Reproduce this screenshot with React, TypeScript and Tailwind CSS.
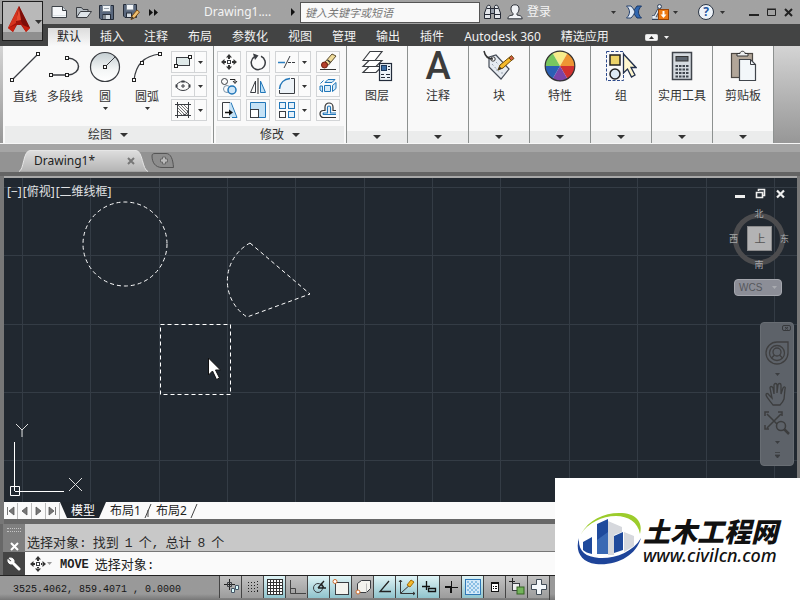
import type { ReactNode } from "react";

const ui = "font-['Noto_Sans','Noto_Sans_CJK_SC',sans-serif]";

function Caret({ className = "" }: { className?: string }) {
  return (
    <svg width="5" height="3" viewBox="0 0 5 3" className={className} aria-hidden="true">
      <path d="M0 0h5L2.5 3z" fill="currentColor" />
    </svg>
  );
}

function PanelCaret() {
  return (
    <svg width="8" height="4" viewBox="0 0 8 4" aria-hidden="true">
      <path d="M0 0h8L4 4z" fill="#333" />
    </svg>
  );
}

function Node({ x, y }: { x: number; y: number }) {
  return <rect x={x - 1.5} y={y - 1.5} width="3" height="3" fill="#fff" stroke="#222" />;
}

function Svg({ w, h, children }: { w: number; h: number; children: ReactNode }) {
  return (
    <svg width={w} height={h} viewBox={`0 0 ${w} ${h}`} fill="none" stroke="#3a3d42" className="block shrink-0" aria-hidden="true">
      {children}
    </svg>
  );
}

/* ---------- title bar ---------- */

function AppLogo() {
  return (
    <svg width="24" height="27" viewBox="0 0 24 27" aria-hidden="true">
      <path d="M12 0 1 22l5 4 4-7h4l5 7 4-4z" fill="#a3140c" />
      <path d="M12 0 1 22l8-5z" fill="#d5341f" />
      <path d="M12 0 9 17l3-6 4 8 7 3z" fill="#7d0e09" />
      <path d="M12 2l-3 13 5-1z" fill="#e64a30" />
      <path d="M1 22l5 4 3-7zM23 22l-4 4-4-7z" fill="#c8200f" />
    </svg>
  );
}

function IconNew() {
  return (
    <Svg w={17} h={14}>
      <path d="M1 1.5h10.5l4 4V12.5H1z" fill="#f6f8fa" stroke="#3b4046" />
      <path d="M11.5 1.5v4h4" fill="#cfd6dc" />
      <path d="M2 10.5h13" stroke="#dce2e6" />
    </Svg>
  );
}
function IconOpen() {
  return (
    <Svg w={17} h={14}>
      <path d="M1.5 12.5V2.5h5l1.5 2h5v3" fill="#b9c0c6" />
      <path d="M1.5 12.5l4-6h11l-4.5 6z" fill="#dfe5ea" />
    </Svg>
  );
}
function IconSave() {
  return (
    <Svg w={15} h={15}>
      <path d="M.5.5h14v14H2L.5 13z" fill="#59677d" stroke="#252c38" />
      <rect x="3.5" y=".5" width="8" height="6" fill="#f2f5f8" stroke="#77828f" />
      <path d="M5 3.5h5" stroke="#9aa5b0" />
      <rect x="4" y="9.5" width="7.5" height="5" fill="#d3dae1" stroke="#252c38" />
      <path d="M6 10v4" stroke="#252c38" />
    </Svg>
  );
}
function IconSaveAs() {
  return (
    <Svg w={17} h={16}>
      <path d="M.5.5h13v13H2L.5 12z" fill="#59677d" stroke="#252c38" />
      <rect x="3.5" y=".5" width="7" height="5.5" fill="#f2f5f8" stroke="#77828f" />
      <rect x="3.5" y="9" width="5" height="4.5" fill="#d3dae1" stroke="#252c38" />
      <path d="M8 15.5l1-3.5 5-6 2.500 2-5 6z" fill="#f0c070" stroke="#7a4b12" />
      <path d="M8 15.5l1-3 2 1.5z" fill="#333" stroke="none" />
    </Svg>
  );
}
function IconBinoculars() {
  return (
    <Svg w={17} h={16}>
      <path d="M3 2.5C3 .8 6.5.8 6.5 2.5V14.500h-6V9z" fill="#e4e7ec" stroke="#262b36" />
      <path d="M14 2.5C14 .8 10.5.8 10.5 2.5V14.500h6V9z" fill="#e4e7ec" stroke="#262b36" />
      <path d="M6.500 4.500h4v5h-4z" fill="#9ba2ad" stroke="#262b36" />
      <path d="M.5 10.500h6M10.500 10.500h6M3 4.500h3M11 4.500h3" stroke="#262b36" />
    </Svg>
  );
}
function IconUser() {
  return (
    <Svg w={16} h={16}>
      <path d="M.8 14.8c0-2.800 2.200-3.300 5.200-3.800V9.500C4.500 8 4 6.500 4 4.800 4 2 5.500.8 8 .8s4 1.200 4 4c0 1.700-.5 3.200-2 4.700V11c3 .5 5.200 1 5.200 3.800z" fill="#f1f3f6" stroke="#30343c" />
    </Svg>
  );
}
function IconExchange() {
  return (
    <Svg w={16} h={14}>
      <path d="M15.500 1h-4.500L8.500 4.500 7 7l1.500 2.500L11 13h4.500c-2-2-3-4-3-6s1-4 3-6z" fill="#2f66b0" stroke="#1d3a68" />
      <path d="M.5 1H5l2.500 3L9 7l-1.500 3L5 13H.5c2-2 3-4 3-6s-1-4-3-6z" fill="#dfe9f5" stroke="#26426f" />
    </Svg>
  );
}
function IconDownload() {
  return (
    <Svg w={17} h={16}>
      <path d="M7.5 1v3L3 12.5H1v2h6" stroke="#34445c" strokeWidth="3" />
      <path d="M7.5 1v3L3 12.5H1v1.500h6" stroke="#e8eef5" strokeWidth="1.5" />
      <circle cx="7.5" cy="2.5" r="2" fill="#dfe7f0" stroke="#34445c" />
      <rect x="6.5" y="5.5" width="10" height="10" fill="#ee7a12" stroke="#9c4404" />
      <path d="M11.5 7v4" stroke="#fff" strokeWidth="2" />
      <path d="M8.500 10.500h6l-3 3.500z" fill="#fff" stroke="none" />
    </Svg>
  );
}
function IconHelp() {
  return (
    <span className="flex size-4 items-center justify-center rounded-full border border-[#2b3544] bg-[#eef3f9] text-xs font-bold leading-none text-[#2557a0]">
      ?
    </span>
  );
}

/* ---------- ribbon icons ---------- */

function IconLine() {
  return (
    <Svg w={30} h={30}>
      <path d="M2 28 28 2" strokeWidth="1.2" />
      <Node x={2} y={28} />
      <Node x={28} y={2} />
    </Svg>
  );
}
function IconPolyline() {
  return (
    <Svg w={32} h={30}>
      <path d="M18 6h1c14 1 14 16 0 17H3" strokeWidth="1.5" />
      <Node x={18} y={6} />
      <Node x={18} y={23} />
      <Node x={2} y={23} />
    </Svg>
  );
}
function IconCircle() {
  return (
    <Svg w={32} h={32}>
      <defs>
        <linearGradient id="circleFill" x1="0" y1="0" x2="0" y2="1">
          <stop offset="0" stopColor="#c4ced2" />
          <stop offset=".6" stopColor="#f4f6f6" />
          <stop offset="1" stopColor="#fff" />
        </linearGradient>
      </defs>
      <circle cx="16" cy="16" r="14.5" fill="url(#circleFill)" strokeWidth="1.2" />
      <path d="M16 16 26 6" />
      <Node x={16} y={16} />
    </Svg>
  );
}
function IconArc() {
  return (
    <Svg w={30} h={30}>
      <path d="M2 28C4 12 12 4 28 2" strokeWidth="1.2" />
      <Node x={2} y={28} />
      <Node x={10} y={11} />
      <Node x={28} y={2} />
    </Svg>
  );
}
function IconRect() {
  return (
    <Svg w={18} h={14}>
      <rect x="2.5" y="2.5" width="13" height="8" fill="#dfe9e9" />
      <Node x={2} y={11} />
      <Node x={16} y={2} />
    </Svg>
  );
}
function IconEllipse() {
  return (
    <Svg w={18} h={14}>
      <ellipse cx="9" cy="7" rx="6.5" ry="4.5" />
      <path d="M9 5v4M7 7h4" />
      <path d="M2.5 5.5v3M15.5 5.5v3M7.500 2.500h3" strokeWidth="2" />
    </Svg>
  );
}
function IconHatch() {
  return (
    <Svg w={18} h={18}>
      <path d="M3.5 1v16M14.5 1v16M1 3.500h16M1 14.500h16" />
      <path d="M4 10l4 4M4 7l7 7M4 4l10 10M7 4l7 7M10 4l4 4" stroke="#777" />
      <path d="M9 14c3 0 5-2 5-5" />
    </Svg>
  );
}
function IconMove() {
  return (
    <Svg w={18} h={18}>
      <g fill="#333" stroke="none">
        <path d="M9 1l3 3.500H6zM9 17l3-3.500H6zM1 9l3.500-3v6zM17 9l-3.500-3v6z" />
        <path d="M8 4h2v2H8zM8 12h2v2H8zM4 8h2v2H4zM12 8h2v2h-2z" />
      </g>
      <rect x="7.5" y="7.5" width="3" height="3" fill="#fff" />
    </Svg>
  );
}
function IconRotate() {
  return (
    <Svg w={18} h={18}>
      <path d="M5.500 3.700A7 7 0 1 0 12 3.200" strokeWidth="1.500" />
      <path d="M4 .5l5.500 2L6 7z" fill="#3a3d42" stroke="none" />
    </Svg>
  );
}
function IconTrim() {
  return (
    <Svg w={18} h={18}>
      <path d="M0 9.500h7" stroke="#2a7fc1" strokeWidth="1.5" />
      <path d="M10 9.500h8" strokeDasharray="3 1" />
      <path d="M6 15l6-12" />
    </Svg>
  );
}
function IconErase() {
  return (
    <Svg w={18} h={18}>
      <path d="M1 16.500h16" stroke="#333" />
      <path d="M6 9l7-8 4 2-7.500 9z" fill="#f0dc9b" stroke="#5a4b2d" />
      <path d="M8.500 7l3 2.500" stroke="#333" strokeWidth="1.5" />
      <circle cx="5.5" cy="12" r="3" fill="#b5402c" stroke="#6e2013" />
    </Svg>
  );
}
function IconCopy() {
  return (
    <Svg w={18} h={18}>
      <circle cx="4.5" cy="4.5" r="3" />
      <path d="M10 2.500h5v3M13 4l2 2.500L17 4" stroke="#222" />
      <circle cx="7" cy="12" r="3.5" stroke="#7c93a8" />
      <circle cx="12" cy="13" r="4" fill="#cfe6f7" stroke="#2176b8" strokeWidth="1.5" />
    </Svg>
  );
}
function IconMirror() {
  return (
    <Svg w={18} h={18}>
      <path d="M6.5 4v11.500H1.500z" />
      <path d="M9 1v16" stroke="#222" />
      <path d="M11.5 4v11.500h5z" fill="#bfe0f5" stroke="#2176b8" />
    </Svg>
  );
}
function IconFillet() {
  return (
    <Svg w={18} h={18}>
      <path d="M1.5 17V13C2 6 6 2 13 1.500h4V16.500H1.500z" fill="#edf3f8" stroke="none" />
      <path d="M1.5 12C2 6 6 2 12 1.500" stroke="#2176b8" strokeWidth="1.5" />
      <path d="M13 1.500h3.500V16.500H1.500V13" />
    </Svg>
  );
}
function IconExplode() {
  return (
    <Svg w={18} h={18}>
      <g fill="#d8ecf9" stroke="#2176b8">
        <path d="M5.500 8.500h6v6h-6z" />
        <path d="M6 5.500l3-3h7l-3 3z" />
        <path d="M13.500 8.500l3.500-3v6l-3.500 3z" />
        <path d="M3.500 9v6L1 13V9zM1.500 6.500l3-3" />
      </g>
    </Svg>
  );
}
function IconStretch() {
  return (
    <Svg w={18} h={18}>
      <path d="M10.5 1.500 16.500 16.500H9V1.500z" fill="#c5e2f6" stroke="none" />
      <path d="M11 1.500l6 15h-5" stroke="#2176b8" />
      <path d="M10 1.500H2.500v15H10" />
      <path d="M5 11.500h5" stroke="#111" strokeWidth="1.5" />
      <path d="M9 8.500l4 3-4 3z" fill="#111" stroke="none" />
    </Svg>
  );
}
function IconScale() {
  return (
    <Svg w={18} h={18}>
      <path d="M1.500 1.500h15v15h-15z" fill="#c5e2f6" stroke="#2176b8" />
      <rect x="1.5" y="8.5" width="8" height="8" fill="#fff" />
    </Svg>
  );
}
function IconArray() {
  return (
    <Svg w={18} h={18}>
      <rect x="1.5" y="10.5" width="6" height="6" />
      <g fill="#e6f2fb" stroke="#2176b8">
        <rect x="1.5" y="1.5" width="6" height="6" />
        <rect x="10.5" y="1.5" width="6" height="6" />
        <rect x="10.5" y="10.5" width="6" height="6" />
      </g>
    </Svg>
  );
}
function IconOffset() {
  return (
    <Svg w={18} h={18}>
      <path d="M17 16.500H4.500a3.500 3.500 0 0 1 0-7H6V6a4 4 0 0 1 8 0v3.500h3" stroke="#333" strokeWidth="1.2" />
      <path d="M17 13.500H4.500a1 1 0 0 1 0-1.500H8.500V6.500a1.500 1.500 0 0 1 3 0V12H17" stroke="#2176b8" strokeWidth="1.2" />
    </Svg>
  );
}
function IconLayers() {
  return (
    <Svg w={32} h={32}>
      <g fill="#fff" strokeWidth="1.2">
        <path d="M2 22.500l6-6h13l-6 6z" />
        <path d="M2 16.500l6-6h13l-6 6z" />
        <path d="M2 10.500l7-9h12l-7 9z" />
      </g>
      <rect x="18.5" y="13.5" width="12" height="17" fill="#edf3f9" stroke="#222b3a" strokeWidth="1.2" />
      <rect x="20.5" y="15.5" width="5" height="5" fill="#3c6ea4" stroke="#1c3658" />
      <path d="M27 16.500h2M27 19.500h2M20 24.500h3M25 24.500h4M20 27.500h4M26 27.500h3" stroke="#222b3a" />
    </Svg>
  );
}
function IconTag() {
  return (
    <Svg w={32} h={32}>
      <path d="M6 7l7-2 13 14-8 10L6 17z" fill="#e6ebf1" stroke="#454c57" strokeWidth="1.2" />
      <path d="M9 14l8 9M13 12l7 7M13 20h3M18 23h2" stroke="#9aa3ae" strokeDasharray="2 2" />
      <circle cx="10" cy="9" r="2.2" fill="#fff" stroke="#333" />
      <path d="M10 9C4 9 2 6 1 1" stroke="#333" strokeWidth="1.5" />
      <path d="M15 20l2-5L28 6l2 3-10 9z" fill="#f4b92b" stroke="#704b08" />
      <path d="M26 8l2.500-2.500 2.500 3-2.500 2z" fill="#cf5b45" stroke="#704b08" />
      <path d="M15 20l1.500-3.500 2.500 2z" fill="#333" stroke="none" />
    </Svg>
  );
}
function IconWheel() {
  return (
    <Svg w={32} h={32}>
      <g stroke="none">
        <path d="M16 16 8.500 3a15 15 0 0 1 15 0z" fill="#f7ec8b" />
        <path d="M16 16 23.500 3A15 15 0 0 1 31 16z" fill="#ee9433" />
        <path d="M16 16H31a15 15 0 0 1-7.500 13z" fill="#d13130" />
        <path d="M16 16l7.500 13a15 15 0 0 1-15 0z" fill="#7b44a8" />
        <path d="M16 16 8.500 29A15 15 0 0 1 1 16z" fill="#2b5fb4" />
        <path d="M16 16H1A15 15 0 0 1 8.500 3z" fill="#78c65f" />
      </g>
      <circle cx="16" cy="16" r="14.8" stroke="#333" strokeWidth="1.2" />
    </Svg>
  );
}
function IconGroup() {
  return (
    <Svg w={32} h={32}>
      <rect x="1.5" y="1.5" width="17" height="29" stroke="#2e4b8c" strokeDasharray="3 1.5" />
      <rect x="5" y="5" width="10" height="10" fill="#ecd268" stroke="#222" strokeWidth="1.5" />
      <circle cx="10" cy="24" r="5" fill="#dde9f2" stroke="#222" strokeWidth="1.5" />
      <path d="M18.500 4v19l4-4 4 8 3.500-2-4-7.500h5z" fill="#fff7cf" stroke="#22304c" strokeWidth="1.3" />
    </Svg>
  );
}
function IconCalc() {
  return (
    <Svg w={32} h={32}>
      <rect x="6.5" y="2.5" width="19" height="27" fill="#d5dadf" stroke="#40454c" strokeWidth="1.5" />
      <rect x="10" y="6.5" width="12" height="4.5" fill="#5d656f" stroke="#333" />
      <g stroke="#3f454d" strokeWidth="2.2" strokeDasharray="2.5 1">
        <path d="M9.500 16h13.500M9.500 19.500h13.500M9.500 23h13.500M9.500 26.500h13.500" />
      </g>
    </Svg>
  );
}
function IconClipboard() {
  return (
    <Svg w={32} h={32}>
      <rect x="4.5" y="3.5" width="21" height="24" fill="#b2a699" stroke="#4d4843" strokeWidth="1.2" />
      <path d="M10 6V3.500h3c0-3 5-3 5 0h3V6z" fill="#eceef0" stroke="#333" />
      <path d="M12.500 9.500h11l5 5v16h-16z" fill="#f3f7fa" stroke="#40454c" strokeWidth="1.2" />
      <path d="M23.500 9.500v5h5" />
    </Svg>
  );
}

/* ---------- ribbon parts ---------- */

function BigTool({ label, icon, caret, className }: { label: string; icon: ReactNode; caret?: boolean; className: string }) {
  return (
    <button className={`flex flex-col items-center ${className}`}>
      <span className="flex h-8 items-center">{icon}</span>
      <span className="mt-1 leading-5">{label}</span>
      {caret && <Caret />}
    </button>
  );
}

function ToolButton({ label, icon }: { label: string; icon: ReactNode }) {
  return (
    <button aria-label={label} className="flex h-[22px] w-6 items-center justify-center border border-[#d2d4d6] bg-[#fbfbfb]">
      {icon}
    </button>
  );
}

function SplitButton({ label, icon }: { label: string; icon: ReactNode }) {
  return (
    <div className="flex h-[22px] w-9 border border-[#d2d4d6] bg-[#fbfbfb]">
      <button aria-label={label} className="flex w-[22px] items-center justify-center">
        {icon}
      </button>
      <button aria-label={`${label} ▾`} className="flex flex-1 items-center justify-center border-l border-[#d2d4d6]">
        <Caret />
      </button>
    </div>
  );
}

function PanelTitle({ children }: { children: ReactNode }) {
  return (
    <button className="mx-0.5 flex h-[17px] items-center justify-center gap-2 bg-[#ebecec] leading-none">{children}</button>
  );
}

const smallPanels: { label: string; icon: ReactNode }[] = [
  { label: "图层", icon: <IconLayers /> },
  { label: "注释", icon: <span className="text-[38px] font-medium leading-8 text-[#3c3c3c] font-['Roboto',sans-serif]">A</span> },
  { label: "块", icon: <IconTag /> },
  { label: "特性", icon: <IconWheel /> },
  { label: "组", icon: <IconGroup /> },
  { label: "实用工具", icon: <IconCalc /> },
  { label: "剪贴板", icon: <IconClipboard /> },
];

const ribbonTabs = ["插入", "注释", "布局", "参数化", "视图", "管理", "输出", "插件", "Autodesk 360", "精选应用"];

function Header() {
  return (
    <header className="flex bg-linear-to-b from-[#a2a2a2] from-[24px] to-[#434444] to-[24px] pl-0.5">
      <button aria-label="应用程序菜单" className="mt-px flex h-10 w-[41px] shrink-0 items-start gap-1 border border-[#1e1e1e] bg-linear-to-b from-[#b9b9b9] from-80% to-[#8f8f8f] to-80% pl-1 pt-1 text-[#333]">
        <AppLogo />
        <svg width="7" height="4" viewBox="0 0 7 4" className="mt-3.5 shrink-0" aria-hidden="true"><path d="M0 0h7L3.500 4z" fill="#333" /></svg>
      </button>
      <div className="min-w-0 flex-1">
        <div className="flex h-6 items-center pl-2 pr-[7px] text-[#333]">
          <div className="flex items-center gap-[7px]">
            <button aria-label="新建"><IconNew /></button>
            <button aria-label="打开"><IconOpen /></button>
            <button aria-label="保存"><IconSave /></button>
            <button aria-label="另存为" className="ml-0.5"><IconSaveAs /></button>
            <button aria-label="更多" className="ml-0.5">
              <Svg w={9} h={7}><path d="M0 0l4 3.500L0 7zM5 0l4 3.500L5 7z" fill="#111" stroke="none" /></Svg>
            </button>
          </div>
          <h1 className="ml-[46px] w-[87px] whitespace-nowrap text-xs text-[#f4f4f4]">Drawing1....</h1>
          <Svg w={4} h={8}><path d="M0 0l4 4-4 4z" fill="#111" stroke="none" /></Svg>
          <input
            aria-label="键入关键字或短语"
            placeholder="键入关键字或短语"
            className="ml-[5px] mr-1 h-[21px] w-[180px] border border-[#555] bg-[#f9f9f9] px-1 text-[11px] italic placeholder:text-[#777]"
          />
          <button aria-label="搜索"><IconBinoculars /></button>
          <button className="ml-1.5 flex items-center gap-1 whitespace-nowrap text-xs text-[#f4f4f4]"><IconUser />登录</button>
          <div className="ml-auto flex items-center gap-1.5">
            <button aria-label="登录选项" className="pr-1"><Caret /></button>
            <button aria-label="Exchange"><IconExchange /></button>
            <button aria-label="更新" className="ml-1 flex items-center gap-1"><IconDownload /><Caret /></button>
            <button aria-label="帮助" className="ml-3.5 flex items-center gap-1.5"><IconHelp /><Caret /></button>
          </div>
          <div className="ml-6 flex items-center gap-2">
            <button aria-label="最小化"><Svg w={10} h={10}><path d="M0 8h10" stroke="#222" strokeWidth="2" /></Svg></button>
            <button aria-label="最大化"><Svg w={9} h={9}><path d="M.5 1.500h8v6h-8zM0 1h9" stroke="#222" /></Svg></button>
            <button aria-label="关闭"><Svg w={9} h={9}><path d="M1 1l7 7M8 1 1 8" stroke="#222" strokeWidth="2" /></Svg></button>
          </div>
        </div>
        <nav className="flex h-[22px] items-center gap-5 pl-[5px] pt-1 text-xs leading-4 text-[#f2f2f2]">
          <button className="-mr-2.5 h-[18px] w-[42px] bg-linear-to-b from-[#dcdcdc] to-[#f9f9f9] text-[#222]">默认</button>
          {ribbonTabs.map((t) => (
            <button key={t} className="whitespace-nowrap">{t}</button>
          ))}
          <button aria-label="最小化功能区" className="ml-4 flex items-center gap-1.5">
            <Svg w={13} h={7}><rect x=".5" y=".5" width="12" height="6" rx="1" fill="#f5f5f5" stroke="#ddd" /><path d="M4 5l2.500-3L9 5z" fill="#333" stroke="none" /></Svg>
            <Caret />
          </button>
        </nav>
      </div>
    </header>
  );
}

function Ribbon() {
  return (
    <div className="flex h-[98px] border-b border-[#f6f6f6] bg-linear-to-b from-[#d4d4d4] to-[#979797] pl-[3px] text-xs text-[#333]">
      <section className="flex w-[211px] shrink-0 flex-col border-r border-[#8d9190] bg-[#f9f9f9]">
        <div className="flex flex-1 pl-0.5 pt-[5px]">
          <BigTool className="w-10" label="直线" icon={<IconLine />} />
          <BigTool className="w-10" label="多段线" icon={<IconPolyline />} />
          <BigTool className="w-10" label="圆" icon={<IconCircle />} caret />
          <BigTool className="w-11" label="圆弧" icon={<IconArc />} caret />
          <div className="ml-0.5 flex flex-col gap-0.5">
            <SplitButton label="矩形" icon={<IconRect />} />
            <SplitButton label="椭圆" icon={<IconEllipse />} />
            <SplitButton label="图案填充" icon={<IconHatch />} />
          </div>
        </div>
        <PanelTitle>绘图<PanelCaret /></PanelTitle>
      </section>
      <section className="flex w-[133px] shrink-0 flex-col border-r border-[#8d9190] bg-[#f9f9f9]">
        <div className="flex flex-1 gap-[5px] pl-[3px] pt-[5px]">
          <div className="flex flex-col gap-0.5">
            <ToolButton label="移动" icon={<IconMove />} />
            <ToolButton label="复制" icon={<IconCopy />} />
            <ToolButton label="拉伸" icon={<IconStretch />} />
          </div>
          <div className="flex flex-col gap-0.5">
            <ToolButton label="旋转" icon={<IconRotate />} />
            <ToolButton label="镜像" icon={<IconMirror />} />
            <ToolButton label="缩放" icon={<IconScale />} />
          </div>
          <div className="flex flex-col gap-0.5">
            <SplitButton label="修剪" icon={<IconTrim />} />
            <SplitButton label="圆角" icon={<IconFillet />} />
            <SplitButton label="阵列" icon={<IconArray />} />
          </div>
          <div className="flex flex-col gap-0.5">
            <ToolButton label="删除" icon={<IconErase />} />
            <ToolButton label="分解" icon={<IconExplode />} />
            <ToolButton label="偏移" icon={<IconOffset />} />
          </div>
        </div>
        <PanelTitle>修改<PanelCaret /></PanelTitle>
      </section>
      {smallPanels.map((p) => (
        <section key={p.label} className="flex w-[61px] shrink-0 flex-col border-r border-[#8d9190] bg-[#f9f9f9]">
          <button className="flex flex-1 flex-col items-center whitespace-nowrap pt-1">
            <span className="flex h-8 items-center">{p.icon}</span>
            <span className="mt-1 leading-5">{p.label}</span>
          </button>
          <button aria-label={`${p.label} ▾`} className="flex h-3 items-center justify-center bg-[#ebecec]"><PanelCaret /></button>
        </section>
      ))}
    </div>
  );
}

function DocTabs() {
  return (
    <div className="flex h-8 shrink-0 items-end border-b-4 border-[#646464] bg-linear-to-b from-[#a5a5a5] from-30% to-[#939393] to-30% pl-[19px]">
      <div className="relative flex h-[22px] w-[132px] items-center pl-[15px] text-xs text-[#222]">
        <svg className="absolute inset-0" width="132" height="22" viewBox="0 0 132 22" aria-hidden="true">
          <defs>
            <linearGradient id="docTab" x1="0" y1="0" x2="0" y2="1">
              <stop offset="0" stopColor="#dedede" />
              <stop offset="1" stopColor="#b4b4b4" />
            </linearGradient>
          </defs>
          <path d="M0 21.500C5 20 4 1 11 .5h106c7 .5 6 19 12 21" fill="url(#docTab)" stroke="#e6e6e6" />
        </svg>
        <button className="relative">Drawing1*</button>
        <button aria-label="关闭图形" className="relative ml-auto mr-4">
          <Svg w={8} h={8}><path d="M1 1l6 6M7 1 1 7" stroke="#777" strokeWidth="2" /></Svg>
        </button>
      </div>
      <button aria-label="新图形" className="mb-1">
        <Svg w={23} h={15}>
          <path d="M4 .5h11c5 0 7 6 7.500 14H11C4 14.500 1 9 1 3 1 1 2 .5 4 .5z" fill="#8d8d8d" stroke="#555" />
          <path d="M9.500 6h2V4h3v2h2v3h-2v2h-3V9h-2z" fill="#bbb" stroke="#6a6a6a" />
        </Svg>
      </button>
    </div>
  );
}

/* ---------- drawing area ---------- */

const gridX = Array.from({ length: 40 }, (_, i) => Math.round(18 + i * 68.35) + 0.5);
const gridY = Array.from({ length: 24 }, (_, i) => Math.round(9 + i * 68.35) + 0.5);

function ViewCube() {
  return (
    <svg width="60" height="66" viewBox="0 0 60 66" className="font-['Noto_Sans_CJK_SC',sans-serif]" aria-label="ViewCube">
      <circle cx="30" cy="33" r="23.5" fill="none" stroke="#4c4c4e" strokeWidth="5" />
      <rect x="18.5" y="20.5" width="24" height="24" fill="#b3b3b4" stroke="#8b8b8c" />
      <g fontSize="9" textAnchor="middle" fill="#a6a8aa">
        <text x="30" y="11">北</text>
        <text x="30" y="62">南</text>
        <text x="4.5" y="36">西</text>
        <text x="55.5" y="36">东</text>
        <text x="31" y="37" fontSize="11" fill="#555">上</text>
      </g>
    </svg>
  );
}

function NavBar() {
  return (
    <div className="flex h-36 w-[34px] flex-col items-center rounded border border-[#686d73] bg-[#5d6269] text-[#3b3d40]">
      <button aria-label="关闭导航栏" className="mr-0.5 mt-0.5 self-end">
        <Svg w={9} h={6}><rect x=".5" y=".5" width="8" height="5" rx="1.5" stroke="#37393c" /><path d="M3 2l3 2.500M6 2 3 4.500" stroke="#37393c" /></Svg>
      </button>
      <button aria-label="导航控制盘" className="mt-2.5 flex flex-col items-center gap-2">
        <Svg w={24} h={24}>
          <g stroke="#3f3f40" strokeWidth="1.3">
            <path d="M12 1h11v11A11 11 0 1 1 12 1z" />
            <circle cx="12" cy="12" r="7.5" />
            <circle cx="12" cy="11" r="4" />
            <path d="M6.500 17l3-3M17.500 17l-3-3" />
          </g>
        </Svg>
        <Caret />
      </button>
      <button aria-label="平移" className="mt-1.5">
        <Svg w={24} h={25}>
          <path d="M8 23C6 20 2 16 1 13c0-2 2-2 3 0l3 3-2-10c0-2 2-2 3 0l1 6V3c0-2 3-2 3 0v8l1-8c0-2 3-2 3 0v9l2-6c1-2 3-1 2 1l-1 10c-1 3-3 5-4 6z" stroke="#3c3d3e" strokeWidth="1.3" />
        </Svg>
      </button>
      <button aria-label="范围缩放" className="mt-1 flex flex-col items-center gap-1.5">
        <Svg w={26} h={24}>
          <g stroke="#3c3d3e" strokeWidth="1.5">
            <path d="M3 3l12 12M17 3 3 17M1 5V1h4M14 1h4v4M1 14v4h4" />
            <circle cx="17" cy="15" r="4.5" fill="#5d6269" />
            <path d="M20 18l5 5" strokeWidth="2.5" />
          </g>
        </Svg>
        <Caret />
      </button>
      <button aria-label="自定义" className="mt-2">
        <Svg w={5} h={6}><path d="M0 .5h5M0 3h5L2.500 6z" fill="#3b3d40" stroke="#3b3d40" strokeWidth=".8" /></Svg>
      </button>
    </div>
  );
}

function Canvas() {
  return (
    <main className="relative min-h-80 flex-1 overflow-hidden border-t-2 border-[#a8a8a8] bg-[#212830]">
      <svg className="absolute inset-0 size-full" fill="none" aria-label="图形">
        <g stroke="#343c45">
          {gridX.map((x) => <line key={x} x1={x} x2={x} y1="0" y2="100%" />)}
          {gridY.map((y) => <line key={y} x1="0" x2="100%" y1={y} y2={y} />)}
        </g>
        <g stroke="#fff" strokeDasharray="4 3">
          <circle cx="121" cy="66" r="42" />
          <path d="M246 65 306 116 243 139A43 43 0 0 1 246 65z" />
          <path d="M156.500 146.500h70v70h-70z" />
        </g>
        <path d="M204.500 180v17l4-4 4 8.500 3-1.500-4-8h5z" fill="#fff" stroke="#111" />
      </svg>
      <svg className="absolute bottom-1 left-1 overflow-visible" width="80" height="80" viewBox="0 0 80 80" fill="none" stroke="#fff" aria-label="UCS">
        <path d="M2.500 68.500h9v9h-9zM7 73.500h49M6.500 73V24" />
        <path d="M8 6l6 6 6-6M14 12v7M61 60l13 13M74 60 61 73" stroke="#ddd" />
      </svg>
      <p className="absolute left-[3px] top-1.5 flex gap-px text-xs text-[#e0e2e4]">
        <span>[−]</span><span>[俯视]</span><span>[二维线框]</span>
      </p>
      <div className="absolute right-3 top-2.5 flex items-center gap-2.5">
        <button aria-label="最小化视口"><Svg w={10} h={10}><path d="M0 7.500h10" stroke="#eee" strokeWidth="3" /></Svg></button>
        <button aria-label="还原视口"><Svg w={11} h={11}><path d="M3.500 3V1.500h6v6H8M1.500 4.500h6v5h-6z" stroke="#eee" strokeWidth="1.6" /></Svg></button>
        <button aria-label="关闭视口"><Svg w={9} h={10}><path d="M1 1.500l7 7M8 1.500l-7 7" stroke="#eee" strokeWidth="2.2" /></Svg></button>
      </div>
      <div className="absolute right-2 top-7"><ViewCube /></div>
      <button className="absolute right-[15px] top-[101px] flex h-[17px] w-12 items-center justify-between rounded border border-[#a5a7ae] bg-[#8c8e97] px-1 text-[10px] text-[#55575c] font-['Liberation_Sans',sans-serif]">
        WCS<Caret className="text-[#a9abb0]" />
      </button>
      <div className="absolute right-[3px] top-36"><NavBar /></div>
    </main>
  );
}

function LayoutTabs() {
  const nav = [
    { label: "首个", d: "M2.5 1v8M9 1v8L4 5z" },
    { label: "上一个", d: "M8 1v8L3 5z" },
    { label: "下一个", d: "M3 1v8l5-4z" },
    { label: "末个", d: "M2 1v8l5-4zM8.5 1v8" },
  ];
  return (
    <div className="flex h-[17px] shrink-0 items-center bg-[#fafafa] text-xs leading-none text-[#222]">
      {nav.map((n) => (
        <button key={n.label} aria-label={n.label} className="flex h-4 w-3.5 items-center justify-center border-r border-[#bbb]">
          <Svg w={11} h={10}><path d={n.d} fill="#777" stroke="#555" strokeWidth=".8" /></Svg>
        </button>
      ))}
      <button className="relative h-[17px] w-[46px] text-white">
        <svg className="absolute inset-0" width="46" height="17" viewBox="0 0 46 17" aria-hidden="true"><path d="M0 0h46l-7 16H7z" fill="#20262d" /></svg>
        <span className="relative">模型</span>
      </button>
      <button className="flex h-[17px] w-[46px] items-center justify-between pl-1">布局1<Svg w={8} h={14}><path d="M7 0 1 14M4 6v7" stroke="#444" /></Svg></button>
      <button className="flex h-[17px] w-[46px] items-center justify-between pl-1">布局2<Svg w={8} h={14}><path d="M7 0 1 14" stroke="#444" /></Svg></button>
    </div>
  );
}

function CommandLine() {
  return (
    <section className="flex h-[51px] shrink-0 pl-[3px] font-['Liberation_Mono','Noto_Sans_CJK_SC',monospace] text-[#2b2b2b]">
      <div className="flex w-[22px] shrink-0 flex-col bg-[#7f7f7f]">
        <div className="mx-1 mt-1 h-1 border-y border-dotted border-[#c5c5c5]" />
        <button aria-label="关闭命令行" className="mt-2 flex h-3 items-center justify-center">
          <Svg w={9} h={9}><path d="M1 1l7 7M8 1 1 8" stroke="#fff" strokeWidth="2" /></Svg>
        </button>
        <button aria-label="自定义命令行" className="mt-auto flex h-[23px] items-center justify-center bg-[#444]">
          <Svg w={14} h={14}><path d="M5.5 5.5 12 12" stroke="#fff" strokeWidth="3" strokeLinecap="round" /><path d="M2 1.200l2.500 2.500L3.500 5 1 2.500C.5 5 2 7.500 5 7L7 5C7.500 2 5 .5 2 1.200z" fill="#fff" stroke="#fff" /></Svg>
        </button>
      </div>
      <div className="min-w-0 flex-1">
        <p className="flex h-7 items-end gap-1.5 whitespace-pre border-b border-[#777] bg-[#c8c8c8] pb-px pl-0.5 text-[13px] leading-none">
          <span>选择对象:</span><span>找到</span><span>1</span><span>个,</span><span>总计</span><span>8</span><span>个</span>
        </p>
        <div className="flex h-[23px] items-center bg-[#fafafa] pl-1 text-[#222]">
          <Svg w={18} h={18}>
            <path d="M9 1l3 3.500H6zM9 17l3-3.500H6zM1 9l3.500-3v6zM17 9l-3.500-3v6zM8 4h2v2H8zM8 12h2v2H8zM4 8h2v2H4zM12 8h2v2h-2z" fill="#333" stroke="none" />
            <rect x="7.5" y="7.5" width="3" height="3" fill="#fff" />
          </Svg>
          <Caret className="text-[#999]" />
          <label htmlFor="cmd" className="ml-2 pt-0.5 text-xs font-bold">MOVE</label>
          <input id="cmd" defaultValue="选择对象:" className="ml-1.5 h-5 min-w-0 flex-1 bg-transparent text-[13px] outline-none" />
        </div>
      </div>
    </section>
  );
}

/* ---------- status bar ---------- */

const statusTools: { label: string; on?: boolean; icon: ReactNode }[] = [
  { label: "推断约束", icon: <><path d="M2 6.500h11M7.500 1v11" stroke="#222" /><path d="M5.500 4.500h4v4h-4z" /><path d="M9.500 10.500h3v4h-3zM13.500 7.500h3v4h-3z" fill="#dff" stroke="#456" /></> },
  { label: "捕捉模式", icon: <path d="M4 4.500h9M4 7.500h9M4 10.500h9M4 13.500h11M13.500 3v11" stroke="#222" strokeDasharray="1 2" /> },
  { label: "栅格显示", on: true, icon: <><rect x="1.5" y="1.5" width="15" height="15" fill="#fff" stroke="#333" /><path d="M4.500 1v16M7.500 1v16M10.500 1v16M13.500 1v16M1 4.500h16M1 7.500h16M1 10.500h16M1 13.500h16" stroke="#333" /></> },
  { label: "正交模式", icon: <path d="M2.500 2v13.500H18M2.500 10.500h5v5" stroke="#444" /> },
  { label: "极轴追踪", on: true, icon: <><circle cx="8" cy="10" r="4.5" /><path d="M8 10l6-7M8 10h8M11 5l3 5" stroke="#222" strokeWidth="1.3" /></> },
  { label: "对象捕捉", on: true, icon: <><rect x="3.5" y="4.5" width="13" height="12" fill="#f3f3ee" /><circle cx="3" cy="3.5" r="2" fill="#fff" stroke="#d06c2a" /></> },
  { label: "三维对象捕捉", icon: <><path d="M3.500 5.500l4-3h9v8l-4 4h-9z" fill="#f3f3ee" /><path d="M12.500 5.500v9" stroke="#bbb" /><circle cx="4" cy="14" r="2" fill="#fff" stroke="#d06c2a" /></> },
  { label: "对象捕捉追踪", on: true, icon: <path d="M13 3 4 13.500h11" stroke="#222" strokeWidth="1.3" /> },
  { label: "动态 UCS", on: true, icon: <><path d="M2.500 2v13.500H17M3 15 14 5M1 4l1.500-2L4 4M15 14l2 1.500-2 1.500" stroke="#333" /><path d="M9 7l4-5 3 2-4 5z" fill="#f4b92b" stroke="#a66c05" /></> },
  { label: "动态输入", on: true, icon: <path d="M2 8.500h8M6.500 3v9M8.500 10.500h7v3h-7z" stroke="#111" strokeWidth="1.3" /> },
  { label: "线宽", icon: <><path d="M3 9h7" stroke="#111" strokeWidth="2" /><path d="M9 9.500h7M9.500 3v6" stroke="#111" /><path d="M9 8v7" stroke="#111" strokeWidth="2" /></> },
  { label: "透明度", on: true, icon: <><rect x="1.5" y="1.5" width="15" height="15" fill="#d3e9f8" stroke="#2e78b7" /><path d="M3 4h12M3 8h12M3 12h12" stroke="#8abfe4" strokeWidth="2" strokeDasharray="2 2" /><path d="M5 6h10M5 10h10M5 14h10" stroke="#8abfe4" strokeWidth="2" strokeDasharray="2 2" /></> },
  { label: "快捷特性", icon: <><rect x="5.5" y="4.5" width="7" height="9" fill="#fff" stroke="#111" /><path d="M5 5h8" stroke="#111" strokeWidth="2" /><path d="M7 8.500h1M9 8.500h2M7 10.500h1M9 10.500h2" stroke="#111" /></> },
  { label: "选择循环", icon: <><path d="M1 3.500h6M4.500 0v6" stroke="#222" /><rect x="4.5" y="5.5" width="7" height="7" fill="#eee" /><rect x="9" y="9" width="7" height="7" fill="#73b35b" stroke="#356323" /></> },
  { label: "注释监视器", icon: <path d="M6.500 1.500h5v5h5v5h-5v5h-5v-5h-5v-5h5z" fill="#f4f8fb" stroke="#3f4a55" /> },
];

function StatusBar() {
  return (
    <footer className="flex h-[25px] shrink-0 border-t border-[#222] bg-linear-to-b from-[#999] from-75% to-[#777]">
      <output className="w-[219px] shrink-0 pl-[13px] pt-1.5 font-['Liberation_Mono',monospace] text-[10px] leading-4 text-[#161616]">
        3525.4062, 859.4071 , 0.0000
      </output>
      {statusTools.map((t) => (
        <button
          key={t.label}
          aria-label={t.label}
          className={`flex h-[22px] w-[22px] shrink-0 items-center justify-center border-l border-[#444] bg-linear-to-b ${t.on ? "from-[#e0f4f6] to-[#8fc3cc]" : "from-[#c2c2c2] to-[#9c9c9c]"}`}
        >
          <Svg w={18} h={18}>{t.icon}</Svg>
        </button>
      ))}
      <span className="border-l border-[#444]" />
    </footer>
  );
}

function SiteBadge() {
  return (
    <aside className="fixed bottom-0 right-0 flex h-[122px] w-[245px] items-center bg-white pl-[21px] text-[#111]">
      <svg width="67" height="54" viewBox="0 0 67 54" aria-hidden="true">
        <path d="M32 9l14 6v5l-8 3v20h-6zM48 20l10 4v10l-10 6z" fill="#d6d8dd" />
        <path d="M7 30l9-5v17c-4-1-7-2-9-4zM21 12 32 7v35H21zM38 24l9-4v18l-9 3z" fill="#1f4a9c" />
        <path d="M21 42V28l11-8v22z" fill="#4d7fc4" opacity=".6" />
        <path d="M5 22C13 7 30 0 46 1c16 1 21 11 18 21C62 10 52 4 40 4 26 4 12 11 5 22z" fill="#9ccc2c" />
        <path d="M3 26C-1 38 4 50 20 52c20 2 40-8 45-26C57 40 39 47 23 46 9 45 2 39 3 26z" fill="#1e4499" />
      </svg>
      <div className="pt-1 italic">
        <p className="font-['Noto_Sans_CJK_SC',sans-serif] text-[27px] font-black leading-7">土木工程网</p>
        <p className="font-['Noto_Sans',sans-serif] text-[18px] font-medium leading-5">www.civilcn.com</p>
      </div>
    </aside>
  );
}

export default function App() {
  return (
    <div className={`flex min-h-screen flex-col bg-[#686868] ${ui}`}>
      <Header />
      <Ribbon />
      <DocTabs />
      <div className="flex flex-1 flex-col border-l-4 border-r-[3px] border-[#777] pb-[5px]">
        <Canvas />
        <LayoutTabs />
      </div>
      <CommandLine />
      <StatusBar />
      <SiteBadge />
    </div>
  );
}
